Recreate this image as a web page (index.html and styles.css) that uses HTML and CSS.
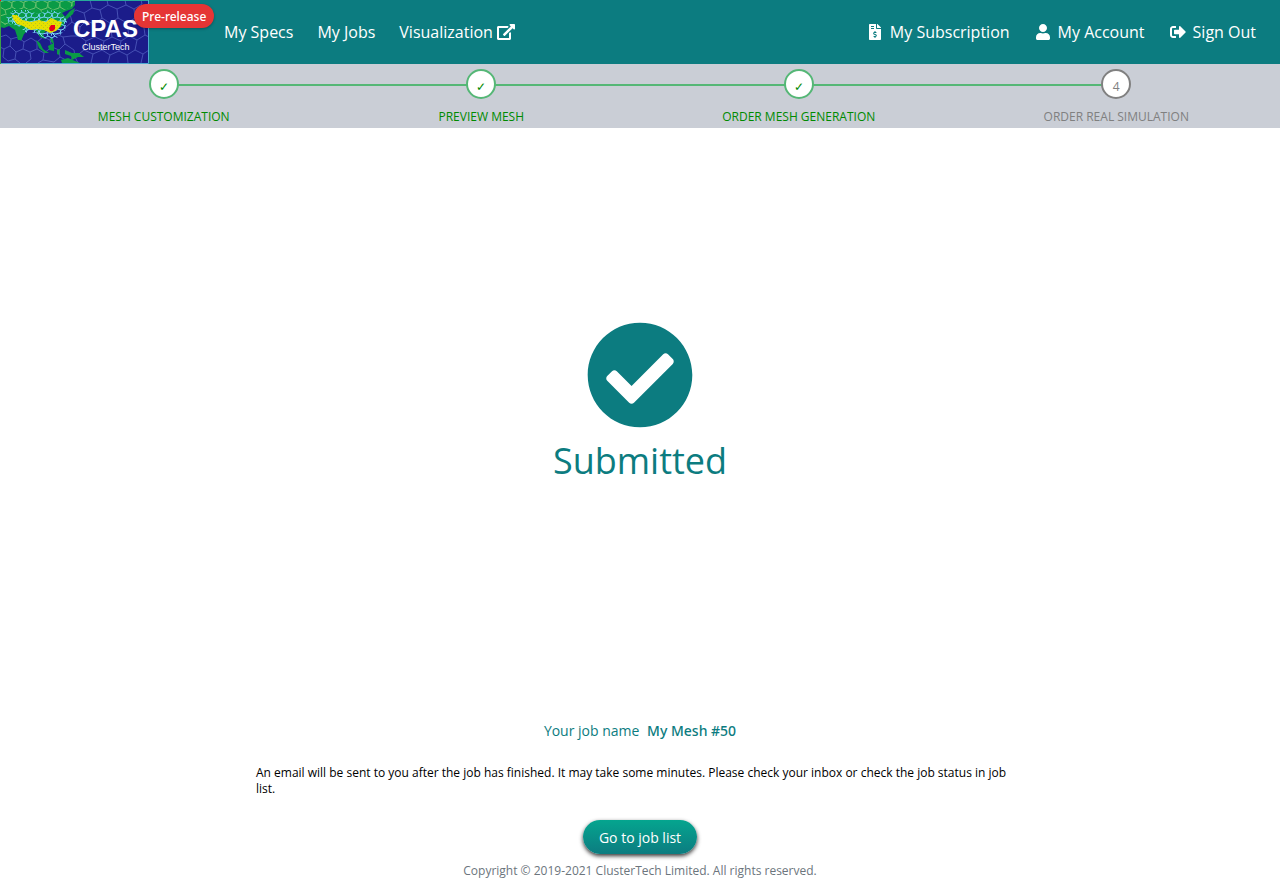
FILE: index.html
```html
<!doctype html>
<html lang="en">
	<head>
		<meta charset="utf-8" />
		<meta name="viewport" content="width=device-width, initial-scale=1.0" />
		<title>CPAS - Submitted</title>
		<link rel="stylesheet" href="styles.css">
	</head>
	<body>
		<header class="navbar">
			<a href="#" class="brand" aria-label="CPAS ClusterTech">
				<svg class="logo" viewBox="0 0 149 64">
					<defs>
						<pattern id="fine" width="13" height="12" patternUnits="userSpaceOnUse">
							<path d="M0 2L3 0L6 2L9 0L13 2M6 2L5 5L1 6L0 2M5 5L9 6L12 5L13 2M1 6L0 9L3 12M9 6L8 9L3 10L0 9M8 9L12 9L13 6M12 9L13 12M8 9L9 12" fill="none" stroke="#78d2fa" stroke-width="1" />
						</pattern>
						<pattern id="medium" width="12" height="14" patternUnits="userSpaceOnUse">
							<path d="M0 2L6 0L12 3L11 8L5 10L0 7ZM5 10L6 14" fill="none" stroke="#6cc06f" stroke-width="1" />
						</pattern>
						<pattern id="dots" width="4" height="4" patternUnits="userSpaceOnUse">
							<rect width="4" height="4" fill="#e6e000" />
							<path d="M1 1h1v1h-1zM3 3h1v1h-1z" fill="#b9c61c" />
						</pattern>
					</defs>
					<rect width="149" height="64" fill="#1b1c8a" />
					<g fill="none" stroke="#4650b4" stroke-width="1">
						<path d="M0 37L6 35L11 39L10 46L4 49L0 47M11 39L18 37L24 42L23 49L16 52L10 46M16 52L15 59L20 63M4 49L3 57L8 61L15 59M23 49L30 52L31 59L26 63M24 42L31 38L37 42L37 49L30 52M37 49L44 53L43 60L38 63M37 42L43 37L50 40L52 47L44 53M52 47L59 50L60 57L54 62L43 60M50 40L56 34L63 37L65 44L59 50M60 57L68 61L75 57L74 50L65 44" />
						<path d="M66 27L72 22L70 14L76 10L84 13L92 8L90 0M84 13L86 21L80 27L72 22M86 21L95 24L102 18L100 10L92 8M100 10L108 5L107 0M108 5L117 9L118 18L110 23L102 18M117 9L126 5L125 0M126 5L134 9L135 18L127 23L118 18M135 18L143 21L149 17M134 9L142 4L141 0M80 27L79 36L86 41L95 37L95 24M95 37L104 41L112 37L110 23M112 37L121 41L129 36L127 23M129 36L137 40L145 35L143 21M145 35L149 37M63 37L71 36L79 36M86 41L84 50L75 57M84 50L93 54L102 50L104 41M102 50L110 55L119 51L121 41M119 51L127 55L135 50L137 40M135 50L143 54L149 50M75 57L78 63M93 54L91 63M110 55L108 63M127 55L128 63M143 54L141 63" />
					</g>
					<path d="M0 0H75V5L72 9L66 11L62 13L67 19L64 25L58 29L52 32L47 30L43 34L45 39L40 37L36 31L29 29L24 34L21 41L17 36L15 30L9 26L4 28L0 27Z" fill="#0a9b46" />
					<path d="M0 0H75V5L62 11L49 9L38 13L27 9L14 9L6 15L8 24L0 27Z" fill="url(#medium)" />
					<path d="M36 40L40 43L43 49L49 53L45 53L39 48ZM48 46L54 43L54 51L49 50ZM57 50L60 49L59 55L57 54ZM61 60L68 58L75 61L80 63H62ZM65 50L72 53L79 53L84 57L78 57L72 60L71 56L65 54ZM50 37L53 39L54 44L51 42ZM70 11L75 8L73 14L67 19L65 17ZM17 37L20 37L20 40L18 40Z" fill="#0a9b46" />
					<path d="M6 16L14 10L27 10L38 14L49 10L60 12L67 20L65 30L57 38L46 39L36 33L27 33L18 26L9 24Z" fill="url(#fine)" />
					<path d="M12 15L17 15L22 20L31 22L39 20L46 22L51 18L58 21L62 22L60 27L56 31L50 33L44 30L37 29L31 30L23 26L17 24L13 19Z" fill="url(#dots)" />
					<path d="M51 25H55V29L53 31L50 31L49 28Z" fill="#e6001e" />
					<path d="M0 0H149" stroke="#28aa9a" stroke-width="2" />
					<path d="M0 63.500H148.500V0" fill="none" stroke="#50aad2" />
					<path d="M.5 0V64" stroke="#3ca046" />
					<path d="M0 0h1v1h-1z" fill="#f00" />
					<text x="73" y="37" class="logo-name">CPAS</text>
					<text x="82" y="50" class="logo-company">ClusterTech</text>
				</svg>
				<span class="badge">Pre-release</span>
			</a>
			<nav class="menu">
				<a href="#">My Specs</a>
				<a href="#">My Jobs</a>
				<a href="#">Visualization
					<svg class="icon-external" viewBox="0 0 576 512"><path d="M576 24v127.984c0 21.461-25.96 31.98-40.971 16.971l-35.707-35.709-243.523 243.523c-9.373 9.373-24.568 9.373-33.941 0l-22.627-22.627c-9.373-9.373-9.373-24.569 0-33.941L442.756 76.676l-35.703-35.705C391.982 25.9 402.656 0 424.024 0H552c13.255 0 24 10.745 24 24zM407.029 270.794l-16 16A23.999 23.999 0 0 0 384 303.765V448H64V128h264a24.003 24.003 0 0 0 16.97-7.029l16-16C376.089 89.851 365.381 64 344 64H48C21.49 64 0 85.49 0 112v352c0 26.51 21.49 48 48 48h352c26.51 0 48-21.49 48-48V287.764c0-21.382-25.852-32.09-40.971-16.97z" /></svg>
				</a>
			</nav>
			<nav class="menu menu-user">
				<a href="#">
					<svg class="icon" viewBox="0 0 384 512"><path d="M377 105L279.1 7c-4.5-4.5-10.6-7-17-7H256v128h128v-6.1c0-6.3-2.5-12.4-7-16.9zm-153 31V0H24C10.7 0 0 10.7 0 24v464c0 13.3 10.7 24 24 24h336c13.3 0 24-10.7 24-24V160H248c-13.2 0-24-10.8-24-24zM64 72c0-4.42 3.58-8 8-8h80c4.42 0 8 3.58 8 8v16c0 4.42-3.58 8-8 8H72c-4.42 0-8-3.58-8-8V72zm0 80v-16c0-4.42 3.58-8 8-8h80c4.42 0 8 3.58 8 8v16c0 4.42-3.58 8-8 8H72c-4.42 0-8-3.58-8-8zm144 263.88V440c0 4.42-3.58 8-8 8h-16c-4.42 0-8-3.58-8-8v-24.29c-11.29-.58-22.27-4.52-31.37-11.35-3.9-2.93-4.1-8.77-.57-12.14l11.75-11.21c2.77-2.64 6.89-2.76 10.13-.73 3.87 2.42 8.26 3.72 12.82 3.72h28.11c6.5 0 11.8-5.92 11.8-13.19 0-5.95-3.61-11.19-8.77-12.73l-45-13.5c-18.59-5.58-31.58-23.42-31.58-43.39 0-24.52 19.05-44.44 42.67-45.07V232c0-4.42 3.58-8 8-8h16c4.42 0 8 3.58 8 8v24.29c11.29.58 22.27 4.51 31.37 11.35 3.9 2.93 4.1 8.77.57 12.14l-11.75 11.21c-2.77 2.64-6.89 2.76-10.13.73-3.87-2.43-8.26-3.72-12.82-3.72h-28.11c-6.5 0-11.8 5.92-11.8 13.19 0 5.95 3.61 11.19 8.77 12.73l45 13.5c18.59 5.58 31.58 23.42 31.58 43.39 0 24.53-19.05 44.44-42.67 45.07z" /></svg>
					My Subscription
				</a>
				<a href="#">
					<svg class="icon" viewBox="0 0 448 512"><path d="M224 256c70.7 0 128-57.3 128-128S294.7 0 224 0 96 57.3 96 128s57.3 128 128 128zm89.6 32h-16.7c-22.2 10.2-46.9 16-72.9 16s-50.6-5.8-72.9-16h-16.7C60.2 288 0 348.2 0 422.4V464c0 26.5 21.5 48 48 48h352c26.5 0 48-21.5 48-48v-41.6c0-74.2-60.2-134.4-134.4-134.4z" /></svg>
					My Account
				</a>
				<a href="#">
					<svg class="icon" viewBox="0 0 512 512"><path d="M497 273L329 441c-15 15-41 4.5-41-17v-96H152c-13.3 0-24-10.7-24-24v-96c0-13.3 10.7-24 24-24h136V88c0-21.4 25.9-32 41-17l168 168c9.3 9.4 9.3 24.6 0 34zM192 436v-40c0-6.6-5.4-12-12-12H96c-17.7 0-32-14.3-32-32V160c0-17.7 14.3-32 32-32h84c6.6 0 12-5.4 12-12V76c0-6.6-5.4-12-12-12H96c-53 0-96 43-96 96v192c0 53 43 96 96 96h84c6.6 0 12-5.4 12-12z" /></svg>
					Sign Out
				</a>
			</nav>
		</header>

		<ol class="steps">
			<li class="step done"><span class="step-mark">✓</span>Mesh Customization</li>
			<li class="step done"><span class="step-mark">✓</span>Preview Mesh</li>
			<li class="step done"><span class="step-mark">✓</span>Order Mesh Generation</li>
			<li class="step"><span class="step-mark">4</span>Order Real Simulation</li>
		</ol>

		<main class="content">
			<div class="result">
				<svg class="icon-check" viewBox="0 0 512 512"><path d="M504 256c0 136.967-111.033 248-248 248S8 392.967 8 256 119.033 8 256 8s248 111.033 248 248zM227.314 387.314l184-184c6.248-6.248 6.248-16.379 0-22.627l-22.627-22.627c-6.248-6.249-16.379-6.249-22.628 0L216 308.118l-70.059-70.059c-6.248-6.248-16.379-6.248-22.628 0l-22.627 22.627c-6.248 6.248-6.248 16.379 0 22.627l104 104c6.249 6.249 16.379 6.249 22.628.001z" /></svg>
				<h1>Submitted</h1>
			</div>
			<p class="job">Your job name <strong>My Mesh #50</strong></p>
			<p class="note">An email will be sent to you after the job has finished. It may take some minutes. Please check your inbox or check the job status in job list.</p>
			<button type="button" class="btn">Go to job list</button>
		</main>

		<footer class="footer">Copyright © 2019-2021 ClusterTech Limited. All rights reserved.</footer>
	</body>
</html>
```
FILE: styles.css
```css
* { box-sizing: border-box; }
html, body, h1, p, ol, li { margin: 0; padding: 0; }
body { display: flex; flex-direction: column; min-height: 100vh; font-family: "Open Sans", "Noto Sans", sans-serif; font-size: 16px; line-height: 24px; color: #000; background: #fff; }
a { color: #fff; text-decoration: none; }
svg { fill: currentColor; }

.navbar { display: flex; align-items: center; height: 64px; padding-right: 24px; background: #0c7c80; }
.brand { position: relative; width: 224px; height: 64px; }
.logo { display: block; width: 149px; height: 64px; }
.logo-name { font: bold 24px "Liberation Sans", sans-serif; fill: #fff; }
.logo-company { font: 9px "Liberation Sans", sans-serif; fill: #fff; }
.badge { position: absolute; top: 4px; left: 134px; padding: 1px 8px 0; border-radius: 12px; font-family: "Noto Sans", sans-serif; font-size: 12px; font-weight: 500; line-height: 23px; background: #e53535; box-shadow: 0 1px 3px rgba(0, 0, 0, 0.3); }
.menu { display: flex; gap: 24px; }
.menu a { display: flex; align-items: center; gap: 4px; }
.menu-user { gap: 23px; margin-left: auto; }
.menu-user a { gap: 5px; }
.icon { width: 20px; height: 16px; }
.icon-external { width: 18px; height: 16px; }

.steps { display: flex; height: 64px; padding: 5px 5px 0; list-style: none; background: #caced6; }
.step { position: relative; flex: 1; font-size: 12px; text-align: center; text-transform: uppercase; color: #808080; }
.step-mark { position: relative; z-index: 1; display: block; width: 30px; height: 30px; margin: 0 auto 6px; padding-top: 4px; border: 2px solid #808080; border-radius: 50%; background: #fff; }
.step + .step::before { content: ""; position: absolute; top: 15px; right: 50%; width: 100%; height: 2px; background: #55b776; }
.done { color: #008a00; }
.done .step-mark { border-color: #55b776; }

.content { display: flex; flex: 1; flex-direction: column; align-items: center; }
.result { display: flex; flex: 1; flex-direction: column; align-items: center; justify-content: center; padding-bottom: 36px; color: #0c7c80; }
.icon-check { width: 108px; height: 108px; }
h1 { font-size: 36px; font-weight: normal; line-height: 64px; }
.job { margin-bottom: 24px; font-size: 14px; line-height: 20px; color: #0c7c80; }
.job strong { margin-left: 4px; font-family: "Noto Sans", sans-serif; font-weight: 500; }
.note { width: 60%; margin-bottom: 23px; font-size: 12px; line-height: 16px; }
.btn { padding: 8px 16px 6px; border: 0; border-radius: 17px; font-family: inherit; font-size: 14px; line-height: 20px; color: #fff; background: linear-gradient(#05a58f, #0c7c80); box-shadow: 0 2px 4px rgba(0, 0, 0, 0.8); }
.footer { padding: 9px 0 7px; font-size: 12px; line-height: 16px; text-align: center; color: #6c757d; }
```
